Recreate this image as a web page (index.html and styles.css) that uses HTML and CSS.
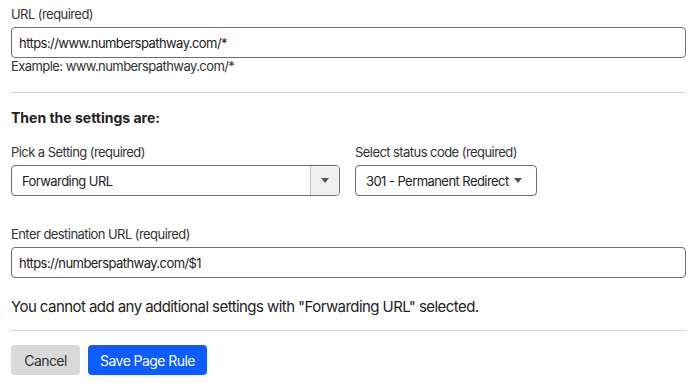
FILE: index.html
```html
<!DOCTYPE html>
<html lang="en">
  <head>
    <meta charset="UTF-8" />
    <meta name="viewport" content="width=device-width, initial-scale=1.0" />
    <title>Page Rule</title>
    <link rel="stylesheet" href="styles.css">
  </head>
  <body>
    <form class="rule-form">
      <div class="field field-url">
        <label for="url">URL (required)</label>
        <input type="text" id="url" value="https://www.numberspathway.com/*" />
        <div class="hint">Example: www.numberspathway.com/*</div>
      </div>

      <hr class="divider" />

      <h3 class="section-title">Then the settings are:</h3>

      <div class="settings-row">
        <div class="field setting-field">
          <label>Pick a Setting (required)</label>
          <div class="combo">
            <span class="combo-value">Forwarding URL</span>
            <span class="combo-toggle"><span class="caret"></span></span>
          </div>
        </div>
        <div class="field status-field">
          <label>Select status code (required)</label>
          <div class="status-select">
            <span>301 - Permanent Redirect</span>
            <span class="caret"></span>
          </div>
        </div>
      </div>

      <div class="field field-dest">
        <label for="dest">Enter destination URL (required)</label>
        <input type="text" id="dest" value="https://numberspathway.com/$1" />
      </div>

      <p class="notice">You cannot add any additional settings with "Forwarding URL" selected.</p>

      <hr class="divider" />

      <div class="actions">
        <button type="button" class="btn btn-cancel">Cancel</button>
        <button type="button" class="btn btn-save">Save Page Rule</button>
      </div>
    </form>
  </body>
</html>
```

FILE: styles.css
```css
body {
  font-family: Inter, 'Noto Sans', sans-serif;
  letter-spacing: -0.035em;
  margin: 0;
  padding: 0 11px;
  background-color: #fff;
  color: #222;
}
.rule-form {
  padding-top: 4px;
}
.field label {
  display: block;
  font-size: 13px;
  line-height: 20px;
  margin-bottom: 3px;
  color: #333;
}
input {
  display: block;
  width: 100%;
  height: 31px;
  box-sizing: border-box;
  padding: 0 7px;
  border: 1px solid #6e6e6e;
  border-radius: 4px;
  font-family: inherit;
  font-size: 13px;
  letter-spacing: inherit;
  color: #222;
  background: #fff;
}
.hint {
  font-size: 13px;
  line-height: 16px;
  color: #333;
}
.divider {
  border: none;
  border-top: 1px solid #d5d5d5;
  margin: 18px 0 0;
}
.section-title {
  font-size: 14px;
  font-weight: 700;
  letter-spacing: 0;
  line-height: 20px;
  margin: 15px 0 0;
  color: #222;
}
.settings-row {
  display: flex;
  gap: 15px;
  margin-top: 14px;
}
.setting-field {
  width: 329px;
}
.combo {
  display: flex;
  height: 31px;
  box-sizing: border-box;
  border: 1px solid #6e6e6e;
  border-radius: 4px;
  overflow: hidden;
  font-size: 13px;
}
.combo-value {
  flex: 1;
  display: flex;
  align-items: center;
  padding-left: 10px;
}
.combo-toggle {
  width: 28px;
  display: flex;
  align-items: center;
  justify-content: center;
  background-color: #f0f0f0;
  border-left: 1px solid #c4c4c4;
}
.caret {
  width: 0;
  height: 0;
  border-left: 4px solid transparent;
  border-right: 4px solid transparent;
  border-top: 5px solid #555;
}
.status-select {
  display: flex;
  align-items: center;
  gap: 5px;
  height: 31px;
  box-sizing: border-box;
  padding: 0 10px 0 10px;
  border: 1px solid #6e6e6e;
  border-radius: 4px;
  font-size: 13px;
  white-space: nowrap;
  width: 182px;
}
.field-dest {
  margin-top: 28px;
}
.notice {
  font-size: 15px;
  line-height: 20px;
  margin: 19px 0 0;
  color: #222;
}
.notice + .divider {
  margin-top: 13px;
}
.actions {
  display: flex;
  gap: 8px;
  margin-top: 14px;
}
.btn {
  height: 30px;
  border: none;
  border-radius: 4px;
  font-family: inherit;
  font-size: 14px;
  letter-spacing: inherit;
  white-space: nowrap;
  padding: 0;
  cursor: pointer;
}
.btn-cancel {
  background-color: #d9d9d9;
  color: #333;
  width: 69px;
}
.btn-save {
  background-color: #0d5cff;
  color: #fff;
  width: 119px;
}
```
